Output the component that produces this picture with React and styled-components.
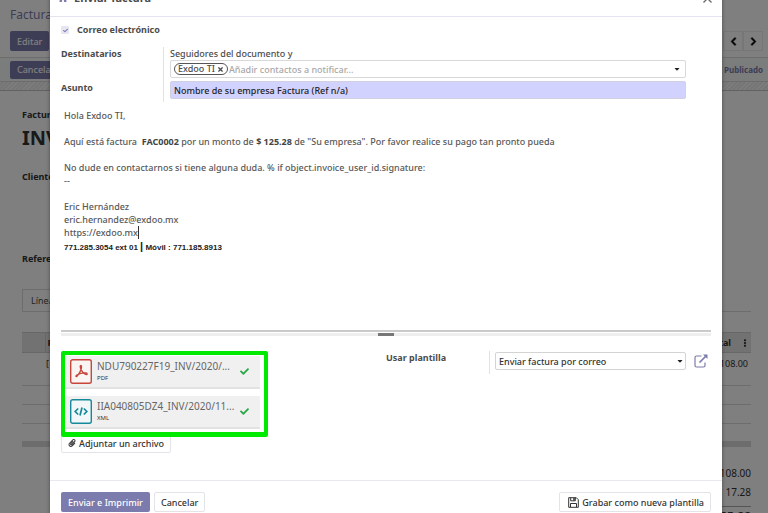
import React from "react";
import styled, { createGlobalStyle, css } from "styled-components";
import {
  FaCaretDown,
  FaCheck,
  FaChevronLeft,
  FaChevronRight,
  FaEllipsisV,
  FaPaperclip,
  FaTimes,
} from "react-icons/fa";

const Global = createGlobalStyle`
  * { box-sizing: border-box; }
  body { margin: 0; background: #fff; }
  body, button, input, select {
    font-family: "Noto Sans", "Open Sans", sans-serif;
    font-size: 9px;
    line-height: 13px;
    color: #4c4c4c;
  }
`;

const Screen = styled.div`
  position: relative;
  height: 100vh;
  overflow: hidden;
`;

/* ---- invoice form behind the dialog ---- */

const Page = styled.div`
  display: flex;
  flex-direction: column;
  min-height: 100%;
`;

const ControlPanel = styled.header`
  height: 58px;
  padding: 6px 5px 0 10px;
  border-bottom: 1px solid #dadada;
`;

const Breadcrumb = styled.a`
  display: block;
  font-size: 12px;
  line-height: 18px;
  color: #7c7bad;
  text-decoration: none;
`;

const PanelRow = styled.div`
  display: flex;
  justify-content: space-between;
  align-items: center;
  margin-top: 7px;
`;

const Pager = styled.div`
  display: flex;
`;

const PagerButton = styled.button`
  display: flex;
  align-items: center;
  justify-content: center;
  width: 20px;
  height: 20px;
  padding: 0;
  border: 1px solid #ececec;
  background: transparent;
  color: #000;

  svg { stroke: currentColor; stroke-width: 40px; }
`;

const PrimaryButton = styled.button`
  height: ${(p) => (p.$small ? "18px" : "20px")};
  padding: 0 7px;
  border: 0;
  border-radius: 2px;
  background: #7c7bad;
  color: #fff;
  font-weight: 500;
  white-space: nowrap;
`;

const StatusBar = styled.div`
  display: flex;
  justify-content: space-between;
  align-items: center;
  height: 23px;
  padding: 0 5px 0 10px;
  background: #f4faf9;
`;

const Status = styled.span`
  font-size: 8px;
  font-weight: 700;
  color: #7c7bad;
`;

const Hatch = styled.div`
  height: 10px;
  border-top: 1px solid #dadada;
  border-bottom: 1px solid #c4c4c4;
  background: repeating-linear-gradient(135deg, #fafafa 0 1px, #ececec 1px 3px);
`;

const Sheet = styled.main`
  flex: 1;
  padding: 17px 17px 0 22px;
  color: #333;
`;

const SheetLabel = styled.div`
  font-weight: 700;
  margin-bottom: ${(p) => p.$gap}px;
`;

const InvoiceName = styled.h1`
  margin: 0 0 18px;
  font-size: 20px;
  line-height: 28px;
  color: #333;
`;

const Tabs = styled.div`
  border-bottom: 1px solid #dadada;
`;

const Tab = styled.button`
  height: 22px;
  padding: 0 8px;
  border: 1px solid #dadada;
  border-bottom: 0;
  background: transparent;
`;

const Lines = styled.table`
  width: 100%;
  margin-top: 20px;
  border-collapse: collapse;
  table-layout: fixed;

  th {
    height: 20px;
    padding: 0 2px;
    background: #e4e4e4;
    border-top: 1px solid #cfcfcf;
    border-bottom: 1px solid #cfcfcf;
    text-align: left;
  }
  th:first-child { width: 23px; border-right: 1px solid #cfcfcf; }
  td {
    height: 19px;
    padding: 0 3px 0 1px;
    border-bottom: 1px solid #dadada;
  }
  tbody tr:first-child td { height: 33px; padding-bottom: 12px; }
  tbody tr:last-child td { height: 18px; }
  tfoot td { height: 5px; background: #dadada; border: 0; }
  th:last-child, td:last-child { text-align: right; }
`;

const HeadEnd = styled.span`
  display: inline-flex;
  align-items: center;
  gap: 10px;
`;

const Totals = styled.dl`
  display: flex;
  flex-direction: column;
  align-items: flex-end;
  margin: 17px 0 0;
`;

const Amount = styled.dd`
  margin: 0;
  line-height: 19px;
  font-size: 10px;
  ${(p) =>
    p.$total &&
    css`
      margin-top: 4px;
      border-top: 1px solid #aaa;
      font-size: 12px;
      font-weight: 700;
    `}
`;

const Backdrop = styled.div`
  position: absolute;
  inset: 0;
  background: rgba(0, 0, 0, 0.5);
`;

/* ---- dialog ---- */

const Dialog = styled.section`
  display: flex;
  flex-direction: column;
  min-height: 100%;
  margin: -20px 46px 0 50px;
  background: #fff;
  box-shadow: 0 0 4px rgba(0, 0, 0, 0.4);
`;

const DialogHead = styled.header`
  display: flex;
  align-items: center;
  height: 37px;
  padding: 0 10px 0 9px;
  border-bottom: 1px solid #e4e4f0;
  color: #7c7bad;
`;

const Title = styled.h2`
  flex: 1;
  margin: 0 0 0 7px;
  font-size: 11px;
  line-height: 18px;
  color: #4c4c4c;
`;

const IconButton = styled.button`
  display: flex;
  padding: 0;
  border: 0;
  background: transparent;
  color: inherit;
`;

const DialogBody = styled.div`
  padding: 6px 11px 0;
`;

const CheckRow = styled.label`
  display: flex;
  align-items: center;
  gap: 8px;
  font-weight: 700;
  line-height: 14px;
`;

const CheckHolder = styled.span`
  display: grid;
  width: 8px;
  height: 8px;
  border-radius: 1px;
  background: #e6e6f2;

  > * { grid-area: 1 / 1; place-self: center; }
  input { appearance: none; width: 8px; height: 8px; margin: 0; }
  svg { color: #7c7bad; pointer-events: none; }
`;

const Fields = styled.div`
  display: grid;
  grid-template-columns: 103px 1fr;
  margin: 10px 25px 0 0;
`;

const Labels = styled.div`
  display: flex;
  flex-direction: column;
  gap: 21px;
  border-right: 1px solid #e2e2e2;
  font-weight: 700;
`;

const Inputs = styled.div`
  padding: 0 0 3px 6px;
  font-weight: 500;
`;

const FieldBox = styled.div`
  display: flex;
  align-items: center;
  height: 18px;
  padding: 0 4px 0 3px;
  border: 1px solid #d9d9d9;
  border-radius: 2px;

  > svg { color: #222; }
`;

const Chip = styled.span`
  display: flex;
  align-items: center;
  gap: 2px;
  height: 12px;
  padding: 0 3px;
  border: 1px solid #555;
  border-radius: 6px;
  line-height: 10px;
`;

const PlainInput = styled.input`
  flex: 1;
  min-width: 0;
  padding: 0 0 0 1px;
  border: 0;
  outline: 0;
  background: transparent;
  font-weight: 500;

  &::placeholder { color: #a8a8a8; opacity: 1; }
`;

const SubjectInput = styled.input`
  display: block;
  width: 100%;
  height: 18px;
  margin-top: 3px;
  padding: 0 3px;
  border: 1px solid #d0d0e0;
  border-radius: 2px;
  background: #d2d2ff;
  color: #222;
  font-weight: 500;
`;

const Editor = styled.div`
  min-height: 228px;
  padding: 7px 3px 0;
  outline: 0;
  font-weight: 500;
  color: #585858;

  p { margin: 0 0 13px; }
  b { color: #444; }
`;

const Caret = styled.span`
  border-left: 1px solid #333;
`;

const Phone = styled.div`
  margin-top: 2px;
  font: 700 8px/13px "Liberation Sans", Arial, sans-serif;
  color: #222;
`;

const Bar = styled.span`
  font-size: 11px;
  line-height: 11px;
`;

const ResizeBar = styled.div`
  display: flex;
  justify-content: center;
  height: 6px;
  padding-top: 1px;
  border-top: 2px solid #cacaca;
  background: linear-gradient(#fff 0 1px, #eee 1px);
`;

const Grip = styled.span`
  width: 16px;
  height: 3px;
  background: #777;
`;

const Lower = styled.div`
  display: grid;
  grid-template-columns: 1fr 1fr;
  margin-top: 15px;
`;

const Files = styled.div`
  display: flex;
  flex-direction: column;
  align-items: flex-start;
`;

const Highlight = styled.ul`
  position: relative;
  z-index: 1;
  display: flex;
  flex-direction: column;
  gap: 7px;
  width: 207px;
  margin: 0;
  padding: 1px 4px 3px 0;
  list-style: none;
  border: 4px solid #00ea00;
  border-bottom-width: 5px;
  border-radius: 2px;
  background: #fff;
`;

const FileCard = styled.li`
  display: flex;
  align-items: center;
  gap: 5px;
  height: 33px;
  padding: 0 11px 0 5px;
  border-bottom: 2px solid #e2e2e2;
  background: #f0f0f0;
`;

const FileIcon = styled.svg`
  width: 22px;
  height: 25px;
  fill: none;
  stroke: ${(p) => p.$color};
`;

const FileText = styled.div`
  flex: 1;
  font-size: 10px;
  line-height: 12px;
  color: #666;
`;

const FileKind = styled.div`
  font-size: 6px;
  color: #333;
`;

const OutlineButton = styled.button`
  display: flex;
  align-items: center;
  gap: 3px;
  height: 20px;
  padding: 0 6px;
  border: 1px solid #e4e4e8;
  border-radius: 2px;
  background: #fff;
  color: #333;
  font-weight: 500;
  white-space: nowrap;
`;

const AttachButton = styled(OutlineButton)`
  margin-top: -4px;
`;

const TemplateRow = styled.div`
  display: grid;
  grid-template-columns: 104px 1fr 14px;
  align-items: start;
  padding-right: 3px;
`;

const TemplateLabel = styled.label`
  height: 23px;
  border-right: 1px solid #e2e2e2;
  font-weight: 700;
`;

const SelectBox = styled.div`
  display: grid;
  height: 18px;
  margin: 1px 8px 0 5px;

  > * { grid-area: 1 / 1; }
  svg { place-self: center end; margin-right: 2px; color: #222; pointer-events: none; }
`;

const Select = styled.select`
  appearance: none;
  width: 100%;
  padding: 0 3px;
  border: 1px solid #d4d4d4;
  border-radius: 2px;
  background: #fff;
  color: #333;
  font-weight: 500;
`;

const OpenButton = styled(IconButton)`
  align-items: center;
  height: 20px;
`;

const ExternalIcon = styled.svg`
  width: 14px;
  height: 14px;
  fill: none;
  stroke: #7c7bad;
`;

const DialogFoot = styled.footer`
  display: flex;
  gap: 4px;
  margin-top: 27px;
  padding: 11px 11px 20px;
  border-top: 1px solid #e8e8f0;
`;

const SaveButton = styled(OutlineButton)`
  margin-left: auto;
  padding: 0 6px 0 8px;
`;

const files = [
  { name: "NDU790227F19_INV/2020/...", kind: "PDF" },
  { name: "IIA040805DZ4_INV/2020/11...", kind: "XML" },
];

function KindIcon({ kind }) {
  if (kind === "PDF") {
    return (
      <FileIcon $color="#c7453b" viewBox="0 0 22 25" aria-hidden="true">
        <rect x="0.7" y="0.7" width="20.6" height="23.6" rx="2" fill="#faf4f3" strokeWidth="1.4" />
        <path d="M11 6.5c-1.2 0-.9 2 .3 4.6 1 2.3 2.8 4 5 4.5 1.2.2 1.3-1.5-.2-1.7-3-.3-6.5.6-9.3 2.1-1.4.8-.9 2.2.2 1.2 1.6-1.5 3.6-5 4.3-7.7.3-1.5.3-3-.3-3z" strokeWidth="1.3" />
      </FileIcon>
    );
  }
  return (
    <FileIcon $color="#16899a" viewBox="0 0 22 25" aria-hidden="true">
      <rect x="0.7" y="0.7" width="20.6" height="23.6" rx="2" fill="#f2f8f9" strokeWidth="1.4" />
      <path d="M8.200 9.500 5.200 12.500l3 3M13.800 9.500l3 3-3 3M12 8.500l-2 8" strokeWidth="1.7" />
    </FileIcon>
  );
}

function Invoice() {
  return (
    <Page>
      <ControlPanel>
        <Breadcrumb href="#facturas">Facturas</Breadcrumb>
        <PanelRow>
          <PrimaryButton>Editar</PrimaryButton>
          <Pager>
            <PagerButton aria-label="Anterior"><FaChevronLeft size={9} /></PagerButton>
            <PagerButton aria-label="Siguiente"><FaChevronRight size={9} /></PagerButton>
          </Pager>
        </PanelRow>
      </ControlPanel>
      <StatusBar>
        <PrimaryButton $small>Cancelar</PrimaryButton>
        <Status>Publicado</Status>
      </StatusBar>
      <Hatch />
      <Sheet>
        <SheetLabel $gap={3}>Factura</SheetLabel>
        <InvoiceName>INV</InvoiceName>
        <SheetLabel $gap={69}>Cliente</SheetLabel>
        <SheetLabel $gap={24}>Referencia</SheetLabel>
        <Tabs><Tab>Líneas</Tab></Tabs>
        <Lines>
          <thead>
            <tr>
              <th />
              <th>Producto</th>
              <th><HeadEnd>Total <FaEllipsisV size={8} /></HeadEnd></th>
            </tr>
          </thead>
          <tbody>
            <tr><td /><td>[</td><td>108.00</td></tr>
            <tr><td /><td /><td /></tr>
            <tr><td /><td /><td /></tr>
            <tr><td colSpan={3} /></tr>
          </tbody>
          <tfoot><tr><td colSpan={3} /></tr></tfoot>
        </Lines>
        <Totals>
          <Amount>108.00</Amount>
          <Amount>17.28</Amount>
          <Amount $total>125.28</Amount>
        </Totals>
      </Sheet>
    </Page>
  );
}

export default function App() {
  return (
    <Screen>
      <Global />
      <Invoice />
      <Backdrop>
        <Dialog role="dialog" aria-labelledby="dialog-title">
          <DialogHead>
            <svg width="8" height="10" viewBox="0 0 8 10" fill="currentColor" aria-hidden="true">
              <path d="M4 0a2 2 0 0 1 1.500 3.300L7 6l.6 3H5.200L4.800 7H3.200L2.800 9H.4L1 6l1.500-2.700A2 2 0 0 1 4 0z" />
            </svg>
            <Title id="dialog-title">Enviar factura</Title>
            <IconButton aria-label="Cerrar">
              <svg width="9" height="9" viewBox="0 0 9 9" stroke="#666" strokeWidth="1.3" aria-hidden="true">
                <path d="M.5.5l8 8M8.500.5l-8 8" />
              </svg>
            </IconButton>
          </DialogHead>
          <DialogBody>
            <CheckRow>
              <CheckHolder>
                <input type="checkbox" defaultChecked />
                <FaCheck size={5} />
              </CheckHolder>
              Correo electrónico
            </CheckRow>
            <Fields>
              <Labels>
                <label htmlFor="recipients">Destinatarios</label>
                <label htmlFor="subject">Asunto</label>
              </Labels>
              <Inputs>
                <div>Seguidores del documento y</div>
                <FieldBox>
                  <Chip>
                    Exdoo TI
                    <IconButton aria-label="Quitar Exdoo TI"><FaTimes size={7} /></IconButton>
                  </Chip>
                  <PlainInput id="recipients" placeholder="Añadir contactos a notificar..." />
                  <FaCaretDown size={8} />
                </FieldBox>
                <SubjectInput id="subject" defaultValue="Nombre de su empresa Factura (Ref n/a)" />
              </Inputs>
            </Fields>
            <Editor contentEditable suppressContentEditableWarning role="textbox" aria-label="Mensaje">
              <p>Hola Exdoo TI,</p>
              <p>
                Aquí está factura &nbsp;<b>FAC0002</b> por un monto de <b>$ 125.28</b> de "Su empresa". Por
                favor realice su pago tan pronto pueda
              </p>
              <p>
                No dude en contactarnos si tiene alguna duda. % if object.invoice_user_id.signature:
                <br />
                --
              </p>
              <div>Eric Hernández</div>
              <div>eric.hernandez@exdoo.mx</div>
              <div>https://exdoo.mx<Caret /></div>
              <Phone>771.285.3054 ext 01 <Bar>|</Bar> Móvil : 771.185.8913</Phone>
            </Editor>
            <ResizeBar><Grip /></ResizeBar>
            <Lower>
              <Files>
                <Highlight>
                  {files.map((f) => (
                    <FileCard key={f.kind}>
                      <KindIcon kind={f.kind} />
                      <FileText>
                        {f.name}
                        <FileKind>{f.kind}</FileKind>
                      </FileText>
                      <FaCheck size={9} color="#28a745" />
                    </FileCard>
                  ))}
                </Highlight>
                <AttachButton><FaPaperclip size={8} />Adjuntar un archivo</AttachButton>
              </Files>
              <TemplateRow>
                <TemplateLabel htmlFor="template">Usar plantilla</TemplateLabel>
                <SelectBox>
                  <Select id="template"><option>Enviar factura por correo</option></Select>
                  <FaCaretDown size={8} />
                </SelectBox>
                <OpenButton aria-label="Abrir plantilla">
                  <ExternalIcon viewBox="0 0 14 14">
                    <path d="M7.500 2H2.500A1.500 1.500 0 0 0 1 3.500v8A1.500 1.500 0 0 0 2.500 13h7a1.500 1.500 0 0 0 1.500-1.500V8.500" strokeWidth="1.2" />
                    <path d="M5.500 8.500 12 2" strokeWidth="1.7" />
                    <path d="M9 .5h4.500V5z" fill="#7c7bad" stroke="none" />
                  </ExternalIcon>
                </OpenButton>
              </TemplateRow>
            </Lower>
          </DialogBody>
          <DialogFoot>
            <PrimaryButton>Enviar e Imprimir</PrimaryButton>
            <OutlineButton>Cancelar</OutlineButton>
            <SaveButton>
              <svg width="11" height="11" viewBox="0 0 11 11" fill="none" stroke="#333" aria-hidden="true">
                <path d="M.7.7h7.600l2 2v7.600H.7zM2.700.7v3.100h4.600V.7M2.500 10V6.500h6V10" />
                <path d="M6 1v2.500" strokeWidth="1.5" />
              </svg>
              Grabar como nueva plantilla
            </SaveButton>
          </DialogFoot>
        </Dialog>
      </Backdrop>
    </Screen>
  );
}
